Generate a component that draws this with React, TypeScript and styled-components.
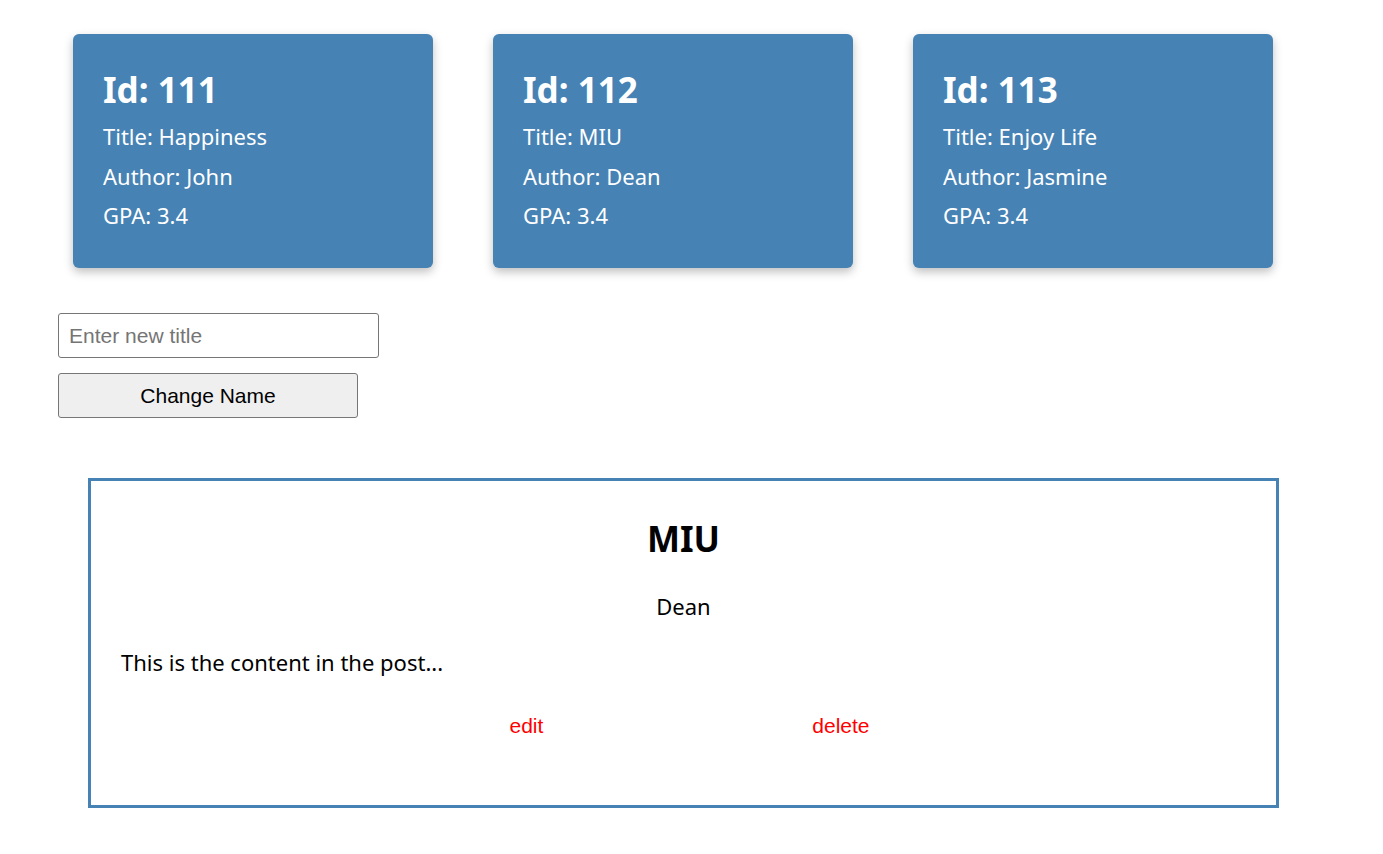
import React from "react"
import styled, {createGlobalStyle} from "styled-components"

type Book = {
	id: number,
	title: string,
	author: string,
	gpa: number
}

const books: Book[] = [
	{id: 111, title: "Happiness", author: "John", gpa: 3.4},
	{id: 112, title: "MIU", author: "Dean", gpa: 3.4},
	{id: 113, title: "Enjoy Life", author: "Jasmine", gpa: 3.4},
]

const GlobalStyle = createGlobalStyle`
	body {
		margin: 0;
		background: #fff;
		font-family: "Noto Sans", "Open Sans", sans-serif;
	}
`

const Page = styled.div`
	display: flex;
	flex-direction: column;
	padding: 34px 0 0 58px;
`

const CardRow = styled.div`
	display: flex;
	gap: 60px;
	padding-left: 15px;
`

const Card = styled.div`
	width: 360px;
	height: 234px;
	box-sizing: border-box;
	padding: 33px 30px;
	background: #4682b4;
	color: #fff;
	border-radius: 6px;
	box-shadow: 0 4px 10px rgba(0, 0, 0, 0.25);
	display: flex;
	flex-direction: column;
`

const CardId = styled.h2`
	margin: 0 0 5px;
	font-size: 35px;
	font-weight: 700;
	line-height: 45px;
`

const CardLine = styled.p`
	margin: 0;
	font-size: 22px;
	line-height: 39.5px;
`

const Form = styled.div`
	display: flex;
	flex-direction: column;
	align-items: flex-start;
	gap: 15px;
	margin-top: 45px;
`

const TitleInput = styled.input`
	width: 321px;
	height: 45px;
	box-sizing: border-box;
	padding: 0 10px;
	border: 1px solid #767676;
	border-radius: 3px;
	font-family: "Liberation Sans", Arial, sans-serif;
	font-size: 21px;
	color: #000;

	&::placeholder {
		color: #757575;
	}
`

const ChangeButton = styled.button`
	width: 300px;
	height: 45px;
	box-sizing: border-box;
	border: 1px solid #767676;
	border-radius: 3px;
	background: #efefef;
	font-family: "Liberation Sans", Arial, sans-serif;
	font-size: 21px;
	color: #000;
`

const Post = styled.div`
	width: 1191px;
	height: 330px;
	box-sizing: border-box;
	margin: 60px 0 0 30px;
	border: 3px solid #4682b4;
	padding: 0 30px;
	display: flex;
	flex-direction: column;
`

const PostTitle = styled.h1`
	margin: 36px 0 0;
	text-align: center;
	font-size: 35px;
	font-weight: 700;
	line-height: 44px;
`

const PostAuthor = styled.div`
	margin-top: 30px;
	text-align: center;
	font-size: 22px;
	line-height: 30px;
`

const PostContent = styled.p`
	margin: 26px 0 0;
	font-size: 22px;
	line-height: 30px;
`

const Actions = styled.div`
	display: flex;
	justify-content: center;
	gap: 269px;
	margin-top: 36px;
	padding-left: 12px;
`

const ActionLink = styled.a`
	color: #ff0000;
	font-family: "Liberation Sans", Arial, sans-serif;
	font-size: 21px;
	line-height: 26px;
	cursor: pointer;
`

const App = () => (
	<Page>
		<GlobalStyle/>
		<CardRow>
			{books.map(b => (
				<Card key={b.id}>
					<CardId>Id: {b.id}</CardId>
					<CardLine>Title: {b.title}</CardLine>
					<CardLine>Author: {b.author}</CardLine>
					<CardLine>GPA: {b.gpa}</CardLine>
				</Card>
			))}
		</CardRow>
		<Form>
			<TitleInput placeholder="Enter new title"/>
			<ChangeButton>Change Name</ChangeButton>
		</Form>
		<Post>
			<PostTitle>MIU</PostTitle>
			<PostAuthor>Dean</PostAuthor>
			<PostContent>This is the content in the post...</PostContent>
			<Actions>
				<ActionLink>edit</ActionLink>
				<ActionLink>delete</ActionLink>
			</Actions>
		</Post>
	</Page>
)

export default App
